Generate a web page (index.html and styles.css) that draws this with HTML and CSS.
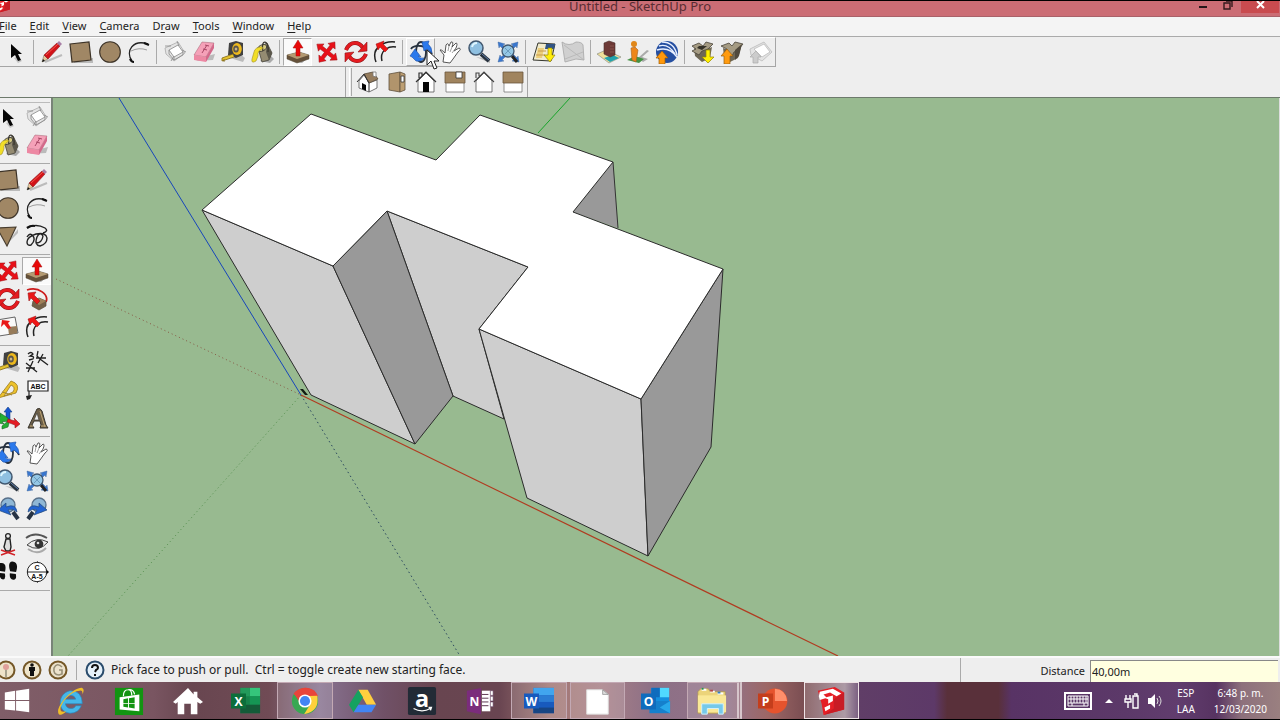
FILE: index.html
```html
<!DOCTYPE html>
<html lang="en">
<head>
<meta charset="utf-8">
<title>Untitled - SketchUp Pro</title>
<link rel="stylesheet" href="styles.css">
</head>
<body>
<svg class="sprite" aria-hidden="true">
<symbol id="select" viewBox="0 0 24 24"><path d="M10 18l4 5 4-2-4-5z" fill="#999" opacity=".5"/><path d="M7 4v14l4-3 3 6 3-1-3-6h4z" fill="#050505"/></symbol>
<symbol id="line" viewBox="0 0 24 24"><path d="M5 22L22 15" stroke="#bbb" stroke-width="2"/><path d="M2 22l2-7 4 4z" fill="#e8c79a" stroke="#665" stroke-width=".5"/><path d="M2 22l1-3 2 2z" fill="#111"/><path d="M4 15L17 3l3 3L8 19z" fill="#d21218" stroke="#8d181c" stroke-width=".6"/><path d="M6 15L18 4" stroke="#f2564c" stroke-width="1"/><path d="M17 3l2-2 3 3-2 2z" fill="#a77fa5"/></symbol>
<symbol id="rect" viewBox="0 0 24 24"><path d="M5 22h18v-4" stroke="#bbb" stroke-width="2" fill="none"/><path d="M1 4l19-2 2 18-19 2z" fill="#a08765" stroke="#3c3226" stroke-width="1.2"/></symbol>
<symbol id="circle" viewBox="0 0 24 24"><circle cx="13" cy="13" r="10" fill="#bbb"/><circle cx="12" cy="12" r="10.3" fill="#a08765" stroke="#3c3226" stroke-width="1.1"/></symbol>
<symbol id="arc" viewBox="0 0 24 24"><path d="M5 21C-2 11 6-1 21 4" fill="none" stroke="#222" stroke-width="1.4"/><path d="M3 19q1 3 4 3M17 3l5 2" stroke="#111" stroke-width="2" fill="none"/><path d="M4 11q8-4 16-1" fill="none" stroke="#888" stroke-width=".8"/></symbol>
<symbol id="component" viewBox="0 0 24 24"><path d="M2 8l13-6 7 11-11 8-8-7z" fill="#e4e4e4" stroke="#aaa" stroke-width=".8"/><path d="M6 10l9-5 5 7-9 5z" fill="#fff" stroke="#888" stroke-width=".8"/><path d="M6 10v4l5 6v-3m0 3l9-5v-3M2 6h6M14 1l2 5M8 21l3-5M19 10l4 2" fill="none" stroke="#888" stroke-width=".8"/></symbol>
<symbol id="eraser" viewBox="0 0 24 24"><path d="M4 21l17-1 2-6-8 2z" fill="#bbb"/><path d="M10 2l12 1-8 14-12-2z" fill="#f5a1b8" stroke="#a06070" stroke-width=".5"/><path d="M2 15l12 2v5L2 20z" fill="#ed88a3"/><path d="M14 17l8-14v5l-8 14z" fill="#d4688a"/><path d="M10 13l5-8M13 5l4 1M11 9l4 1" stroke="#a84765" stroke-width="1"/></symbol>
<symbol id="tape" viewBox="0 0 24 24"><path d="M9 18l13 4 2-4-5-4z" fill="#bbb"/><path d="M8 3l7-2 7 2v12l-7 3-8-3z" fill="#414141"/><ellipse cx="16" cy="9" rx="4.8" ry="6" fill="#edb91d"/><ellipse cx="15" cy="9" rx="2.8" ry="3.6" fill="#5b554b"/><ellipse cx="15" cy="9" rx="1.3" ry="1.6" fill="#c9b687"/><path d="M12 14L1 18v3l12-4M3 19v3" fill="#e4c12e" stroke="#806713" stroke-width=".8"/></symbol>
<symbol id="paint" viewBox="0 0 24 24"><path d="M10 21l10 2 4-4-6-6z" fill="#aaa"/><path d="M8 8l9-5 5 10-3 7-7 2z" fill="#948b72" stroke="#45423a" stroke-width=".8"/><path d="M17 5l5 8-3 7-3-8z" fill="#5b574b"/><ellipse cx="12" cy="8" rx="5" ry="3" transform="rotate(-25 12 8)" fill="#d6ca82" stroke="#333" stroke-width=".8"/><path d="M13 11C10-2 20 0 18 12" fill="none" stroke="#39362e" stroke-width="1.2"/><path d="M12 7Q5 7 4 12l-2 7q-1 5 4 2l2-5q-1-5 5-8" fill="#f1de28" stroke="#a28e24" stroke-width=".6"/></symbol>
<symbol id="push" viewBox="0 0 24 24"><path d="M6 21l10 2 7-6-9-2z" fill="#aaa"/><path d="M1 15l12-3 10 3v4l-12 4-10-4z" fill="#65513a" stroke="#514735" stroke-width=".5"/><path d="M1 15l12-3 10 3-12 4z" fill="#b49a72"/><path d="M12 0l5 8h-3v8h-4V8H7z" fill="#e80808" stroke="#a01010" stroke-width=".5"/></symbol>
<symbol id="move" viewBox="0 0 24 24"><path d="M12-2l5 6h-3v6h6V7l6 5-6 5v-3h-6v6h3l-5 6-5-6h3v-6H4v3l-6-5 6-5v3h6V4H7z" transform="rotate(38 12 12) translate(1 1) scale(.92)" fill="#e81018" stroke="#991418" stroke-width=".5"/></symbol>
<symbol id="rotate" viewBox="0 0 24 24"><g id="half-turn"><path d="M2 10Q5 3 11 3q5 0 8 5" fill="none" stroke="#8b1518" stroke-width="4"/><path d="M2 10Q5 3 11 3q5 0 8 5" fill="none" stroke="#e51b20" stroke-width="3"/><path d="M23 2v9l-9 1z" fill="#e51b20" stroke="#8b1518" stroke-width=".6"/></g><use href="#half-turn" transform="rotate(180 12 12)"/></symbol>
<symbol id="offset" viewBox="0 0 24 24"><path d="M3 22Q-1 11 7 6q6-5 15-4M9 21Q7 13 13 9q4-3 10-2" fill="none" stroke="#222" stroke-width="1.5"/><path d="M3 4l8-3-1 3 5 5-3 3-5-5-2 3z" fill="#ee1515" stroke="#971111" stroke-width=".5"/></symbol>
<symbol id="orbit" viewBox="0 0 24 24"><ellipse cx="12" cy="12" rx="5" ry="10" fill="none" stroke="#27313e" stroke-width="1.8"/><path d="M2 9q2-4 10-3t11 8" fill="none" stroke="#26303d" stroke-width="1.8"/><path d="M13 2l7-1-1 3q4 3 4 9l-5-4-3 2zM1 16l5-7 6 8-3-1q1 3 6 2-2 4-8 3l-4-4z" fill="#2b79ec" stroke="#1c4fa4" stroke-width=".6"/></symbol>
<symbol id="pan" viewBox="0 0 24 24"><path d="M5 22l1-7-4-5q1-1 5 3L8 5q2-3 3 1l2-4q3-1 1 5l4-4q2 0 0 5l-2 3 5-3q3 1-1 4l-5 7-3 4z" fill="#fff" stroke="#444" stroke-width=".9"/><path d="M11 6l-1 5M14 7l-2 5M18 8l-4 5" stroke="#888" stroke-width=".8" fill="none"/></symbol>
<symbol id="zoom" viewBox="0 0 24 24"><path d="M9 17l14 6v-4z" fill="#bbb"/><path d="M14 14l8 7" stroke="#28323d" stroke-width="4"/><path d="M15 14l7 6" stroke="#607fab" stroke-width="1"/><circle cx="9" cy="8" r="7" fill="#8fc0e1" stroke="#42586f" stroke-width="1.5"/><path d="M5 7q1-4 5-4" stroke="#def6ff" stroke-width="2" fill="none"/></symbol>
<symbol id="extents" viewBox="0 0 24 24"><path d="M2 2l7 2-2 1 3 4-2 1-4-4-1 2zM22 2l-1 6-1-2-4 4-2-2 3-3-2-1zM2 22l2-7 1 2 4-3 1 2-4 4 2 1zM23 22l-7-1 3-2-4-3 2-2 4 4 1-2z" fill="#3977cf" stroke="#365e95" stroke-width=".4"/><path d="M16 16l5 6" stroke="#222" stroke-width="3"/><circle cx="12" cy="11" r="6" fill="#94c7e5" stroke="#42586f" stroke-width="1.3"/><path d="M9 8l6 6m0-6l-6 6" stroke="#6c9cbd"/></symbol>
<symbol id="map" viewBox="0 0 24 24"><path d="M1 20L6 3l17 1-4 17z" fill="#f1ebcc" stroke="#35372f" stroke-width="1"/><path d="M14 4h9l-1 5h-9z" fill="#305486"/><path d="M6 8h6l-2 10H4z" fill="#edcf7b"/><path d="M6 11h8M4 15h9" stroke="#c6994e"/><path d="M16 8h4v7h3l-5 7-6-7h4z" fill="#ffed0d" stroke="#958609" stroke-width=".7"/></symbol>
<symbol id="terrain" viewBox="0 0 24 24"><path d="M1 2q7 5 14 0 6 0 7 3l1 15-8-1-11 3z" fill="#d0d0d0" stroke="#a6a6a6" stroke-width=".8"/><path d="M3 5l20 15M4 19l18-7" fill="none" stroke="#b4b4b4" stroke-width=".8"/></symbol>
<symbol id="building" viewBox="0 0 24 24"><path d="M0 14l9-4 15 7-12 6z" fill="#eedf99" stroke="#81847c" stroke-width=".6"/><path d="M7 18l9-3 6 3-9 4z" fill="#22a2ad"/><path d="M7 3l5-2 6 2v12l-5 2-6-3z" fill="#6d3936" stroke="#4b302e" stroke-width=".6"/><path d="M13 6h4m-4 3h4m-4 3h4" stroke="#8f5a52" stroke-width=".8"/></symbol>
<symbol id="street" viewBox="0 0 24 24"><path d="M12 18l9-8 2 1-7 6 6 2-5 3z" fill="#aaa"/><path d="M1 20l8-4 9 3-5 4z" fill="#459244"/><circle cx="8" cy="4" r="3" fill="#e0871a"/><path d="M5 8l4-1 3 3-1 6-1 6-4-2z" fill="#ed861a" stroke="#a56120" stroke-width=".6"/></symbol>
<symbol id="earth" viewBox="0 0 24 24"><circle cx="12" cy="12" r="11" fill="#254fa1"/><path d="M4 6q9-3 16 8M2 10q12-4 20 7M7 2q12 0 15 13" stroke="#e8efff" stroke-width="1.4" fill="none"/><path d="M7 11l6 7h-3v6H4v-6H1z" fill="#ff980b" stroke="#9c5d08" stroke-width=".7"/></symbol>
<symbol id="download" viewBox="0 0 24 24"><path d="M3 8l8 3 10-4-2 11-8 4-7-6z" fill="#6e6755"/><path d="M1 6l7-3 4 3 3-4 7 2-5 5-6 2-3 4-7-4 4-2z" fill="#a59b83" stroke="#49443a" stroke-width=".8"/><path d="M8 6h8l-5 4-5-2z" fill="#353229"/><path d="M15 10h4v7h4l-6 6-6-6h4z" fill="#fff000" stroke="#958600" stroke-width=".7"/></symbol>
<symbol id="upload" viewBox="0 0 24 24"><path d="M3 8l9 3 9-4-3 11-8 4-6-6z" fill="#6e6755"/><path d="M1 6l8-3 3 3 3-4 8 2-5 6-4 2-2 4-7-4 2-3z" fill="#a59b83" stroke="#49443a" stroke-width=".8"/><path d="M22 4l-3 12-4 4V10z" fill="#50493c"/><path d="M7 9l6 7h-3v8H4v-8H1z" fill="#ff9b10" stroke="#935b12" stroke-width=".7"/></symbol>
<symbol id="shareup" viewBox="0 0 24 24"><path d="M1 9l14-7 8 10-10 9-11-6z" fill="#e3e3e3" stroke="#bbb" stroke-width=".8"/><path d="M5 9l10-5 6 8-8 5z" fill="#fff" stroke="#bbb" stroke-width=".8"/><path d="M7 11l5 6H9v6H4v-6H1z" fill="#ccc" stroke="#aaa" stroke-width=".7"/></symbol>
<symbol id="iso" viewBox="0 0 24 24"><path d="M3 11l5-6 5 8v9l-10-4zM13 13l8-3v8l-8 4z" fill="#fff" stroke="#555" stroke-width=".8"/><path d="M8 4l9-2 5 7-9 4z" fill="#967d5e" stroke="#594b3a" stroke-width=".8"/><path d="M1 12l7-8 5 9" fill="none" stroke="#333"/><path d="M6 13l4 2v6l-4-2z" fill="#050505"/><path d="M17 2h3v5l-3-1z" fill="#fff" stroke="#777" stroke-width=".8"/></symbol>
<symbol id="top" viewBox="0 0 24 24"><path d="M4 4l11-2v20L4 20z" fill="#b1946c" stroke="#5f503c" stroke-width=".8"/><path d="M15 2l5 2v16l-5 2z" fill="#bd9f73" stroke="#5f503c" stroke-width=".8"/><path d="M16 6h3v6h-3z" fill="#fff" stroke="#333" stroke-width=".8"/></symbol>
<symbol id="front" viewBox="0 0 24 24"><path d="M4 11l8-8 8 8v11H4z" fill="#fff" stroke="#555" stroke-width=".8"/><path d="M2 12L12 2l10 10M5 8V3h3v3" fill="none" stroke="#333" stroke-width="1.2"/><path d="M9 12h6v10H9z" fill="#050505"/></symbol>
<symbol id="right" viewBox="0 0 24 24"><path d="M3 3h18v19H3z" fill="#fff" stroke="#777" stroke-width=".8"/><path d="M2 2h20v11H2z" fill="#a0845e" stroke="#69563d" stroke-width=".8"/><path d="M13 2h6v6h-6z" fill="#fff" stroke="#333" stroke-width=".8"/></symbol>
<symbol id="backview" viewBox="0 0 24 24"><path d="M4 11l8-8 8 8v11H4z" fill="#fff" stroke="#555" stroke-width=".8"/><path d="M2 12L12 2l10 10M4 8V3h3v3" fill="none" stroke="#444" stroke-width="1.1"/></symbol>
<symbol id="left" viewBox="0 0 24 24"><path d="M3 3h18v19H3z" fill="#fff" stroke="#777" stroke-width=".8"/><path d="M2 2h20v11H2z" fill="#a0845e" stroke="#69563d" stroke-width=".8"/></symbol>
<symbol id="polygon" viewBox="0 0 24 24"><path d="M9 22L22 9v-4z" fill="#bbb"/><path d="M1 4l19-1-9 19z" fill="#9d825d" stroke="#463c2e" stroke-width="1.1"/></symbol>
<symbol id="freehand" viewBox="0 0 24 24"><path d="M2 4q9-5 18 0 4 3-2 5M2 13q3-5 6-1t-2 9q-4 1-4-3 0-5 9-8 10-2 11 4 0 6-7 8-6-1-3-9 3-6 6-1-1 7-7 7" fill="none" stroke="#222" stroke-width="1.4"/><path d="M2 4q4-3 8-2" stroke="#111" stroke-width="2.2" fill="none"/></symbol>
<symbol id="follow" viewBox="0 0 24 24"><path d="M2 3c12-4 22 5 19 12" fill="none" stroke="#cc1b1b" stroke-width="1.8"/><path d="M8 14l6-3 7 3v5l-7 4-7-4z" fill="#736047" stroke="#594c39" stroke-width=".7"/><path d="M8 14l6-3 7 3-7 4z" fill="#a08058"/><path d="M3 6l8-1-2 3 6 6-3 3-6-6-2 3z" fill="#ea1717" stroke="#9b1818" stroke-width=".6"/></symbol>
<symbol id="scale" viewBox="0 0 24 24"><path d="M1 5l18-3 3 16-19 3z" fill="#f9f9f9" stroke="#555" stroke-width=".9"/><path d="M12 12l9-1v7l-8 2z" fill="#967b5a"/><path d="M6 5l8 1-2 2 3 5-3 1-4-5-3 3z" fill="#e81818"/></symbol>
<symbol id="dimension" viewBox="0 0 24 24"><path d="M3 4q3-3 5 0L5 6q5 0 3 3l-4 1M13 1l-1 5 3 3 8 6M18 4l-5 9M11 8h10M8 11l-5 11M1 13l11 9M1 18h9" fill="none" stroke="#222" stroke-width="1.3"/></symbol>
<symbol id="protractor" viewBox="0 0 24 24"><path d="M2 20L15 3q10 3 5 12L2 20zm6-2l9-4q3-5-2-7z" fill="#edc22b" fill-rule="evenodd" stroke="#9a7b20" stroke-width=".8"/><path d="M6 14l10 3" stroke="#a28532"/></symbol>
<symbol id="axes" viewBox="0 0 24 24"><path d="M12 1l4 5h-2v9h-4V6H8z" fill="#1555cf" stroke="#173f84" stroke-width=".6"/><path d="M12 12L4 7v4l-3-1 1 7 6 1-2-2 6-1-6 5v3l6-2 1-4z" fill="#24af33" stroke="#1c642a" stroke-width=".6"/><path d="M12 13l7 2-1-3 6 6-5 4v-3l-8-3z" fill="#e51c24" stroke="#8f1b20" stroke-width=".6"/></symbol>
<symbol id="a3d" viewBox="0 0 24 24"><path d="M3 22L12 3q3-2 5 2l4 14 2 3h-8l1-3-1-4H9l-2 4 2 3z" fill="#6e6049" stroke="#38352d" stroke-width="1"/><path d="M12 7l2 7H9z" fill="#eee" stroke="#44403a" stroke-width=".7"/><path d="M15 5l5 16M5 20h3m8 0h5" stroke="#bda474" fill="none"/></symbol>
<symbol id="previous" viewBox="0 0 24 24"><path d="M17 15l5 7" stroke="#273344" stroke-width="4"/><circle cx="12" cy="8" r="7" fill="#8fb7d5" stroke="#587089" stroke-width="1.3"/><path d="M2 13l8-7v4q10-4 11 5-4-4-9-2l3 5z" fill="#2364d2" stroke="#244a7b" stroke-width=".7"/></symbol>
<symbol id="next" viewBox="0 0 24 24"><path d="M8 15l-5 7" stroke="#273344" stroke-width="4"/><circle cx="14" cy="8" r="7" fill="#8fb7d5" stroke="#587089" stroke-width="1.3"/><path d="M22 13L14 6v4Q4 6 3 15q4-4 9-2l-3 5z" fill="#2364d2" stroke="#244a7b" stroke-width=".7"/></symbol>
<symbol id="position" viewBox="0 0 24 24"><circle cx="12" cy="4" r="2.4" fill="#eee" stroke="#222" stroke-width="1.3"/><path d="M10 7l-2 8 2 4h4l1-4-1-8z" fill="#ddd" stroke="#222" stroke-width="1.4"/><path d="M5 18l14 5m0-5L5 23" stroke="#d12328" stroke-width="1.4"/></symbol>
<symbol id="look" viewBox="0 0 24 24"><path d="M1 6q9-7 21 0" fill="none" stroke="#555" stroke-width="1.8"/><path d="M2 13q9-9 21-3-9 11-21 3z" fill="#ededed" stroke="#444"/><circle cx="14" cy="12" r="4.4" fill="#333"/><circle cx="13" cy="11" r="1.3" fill="#ddd"/><path d="M3 17q10 7 18-1" stroke="#aaa" stroke-width="2" fill="none"/></symbol>
<symbol id="walk" viewBox="0 0 24 24"><path d="M3 12Q-1 4 4 4q6-1 5 8zm1 2h5q2 5-1 6-4 0-4-6zm10-3q-4-9 1-10 7 0 5 10zm0 2h6q2 6-2 6-4 0-4-6z" fill="#111" transform="rotate(7 12 12)"/></symbol>
<symbol id="sketchup" viewBox="0 0 32 32"><path d="M2 5L20 1l10 6v18L8 31 6 19z" fill="#e51f26"/><path d="M19 14l11-7v18L8 31l11-7z" fill="#c81c25"/><path d="M4 6l14-3 9 5-5 3-7-4-7 2 3 3 7-2v6l-5 3v-5l-3-1-6 2-1-4zM9 23l6-3v4l-5 3z" fill="#fff"/></symbol>
</svg>
<header class="titlebar">
<svg class="app-logo" viewBox="0 0 32 32"><use href="#sketchup"/></svg>
<h1>Untitled - SketchUp Pro</h1>
<div class="window-controls">
<button aria-label="Minimize"><svg viewBox="0 0 20 15"><path d="M4 6h8" stroke="#251719" stroke-width="2"/></svg></button>
<button aria-label="Restore"><svg viewBox="0 0 20 15"><path d="M5 2h6v6H5zM7 0h6v6" fill="none" stroke="#33191c" stroke-width="1.4"/></svg></button>
<button class="close" aria-label="Close"><svg viewBox="0 0 20 15"><path d="M7 0l7 7m0-7L7 7" stroke="#fff" stroke-width="2"/></svg></button>
</div>
</header>
<nav class="menubar"><button><u>F</u>ile</button><button><u>E</u>dit</button><button><u>V</u>iew</button><button><u>C</u>amera</button><button>D<u>r</u>aw</button><button><u>T</u>ools</button><button><u>W</u>indow</button><button><u>H</u>elp</button></nav>
<div class="toolbars">
<div class="toolbar" role="toolbar" aria-label="Getting started">
<button aria-label="Select"><svg><use href="#select"/></svg></button><i class="sep"></i>
<button aria-label="Line"><svg><use href="#line"/></svg></button><button aria-label="Rectangle"><svg><use href="#rect"/></svg></button><button aria-label="Circle"><svg><use href="#circle"/></svg></button><button aria-label="Arc"><svg><use href="#arc"/></svg></button><i class="sep"></i>
<button aria-label="Make component"><svg><use href="#component"/></svg></button><button aria-label="Eraser"><svg><use href="#eraser"/></svg></button><button aria-label="Tape measure"><svg><use href="#tape"/></svg></button><button aria-label="Paint bucket"><svg><use href="#paint"/></svg></button><i class="sep"></i>
<button class="pressed" aria-label="Push/Pull"><svg><use href="#push"/></svg></button><button aria-label="Move"><svg><use href="#move"/></svg></button><button aria-label="Rotate"><svg><use href="#rotate"/></svg></button><button aria-label="Offset"><svg><use href="#offset"/></svg></button><i class="sep"></i>
<button class="hovered" aria-label="Orbit"><svg><use href="#orbit"/></svg><svg class="pointer" viewBox="0 0 14 22"><path d="M1 1v15l4-4 3 8 3-1-3-7h5z" fill="#fff" stroke="#222"/></svg></button><button aria-label="Pan"><svg><use href="#pan"/></svg></button><button aria-label="Zoom"><svg><use href="#zoom"/></svg></button><button aria-label="Zoom extents"><svg><use href="#extents"/></svg></button><i class="sep"></i>
<button aria-label="Add location"><svg><use href="#map"/></svg></button><button aria-label="Toggle terrain"><svg><use href="#terrain"/></svg></button><i class="sep"></i>
<button aria-label="Add building"><svg><use href="#building"/></svg></button><button aria-label="Photo textures"><svg><use href="#street"/></svg></button><button aria-label="Preview in Google Earth"><svg><use href="#earth"/></svg></button><i class="sep"></i>
<button aria-label="Get models"><svg><use href="#download"/></svg></button><button aria-label="Share model"><svg><use href="#upload"/></svg></button><button aria-label="Share component"><svg><use href="#shareup"/></svg></button>
</div>
<div class="toolbar views" role="toolbar" aria-label="Views"><i class="grip"></i>
<button aria-label="Iso"><svg><use href="#iso"/></svg></button><button aria-label="Top"><svg><use href="#top"/></svg></button><button aria-label="Front"><svg><use href="#front"/></svg></button><button aria-label="Right"><svg><use href="#right"/></svg></button><button aria-label="Back"><svg><use href="#backview"/></svg></button><button aria-label="Left"><svg><use href="#left"/></svg></button>
</div>
</div>
<div class="workspace">
<aside class="palette" aria-label="Large tool set">
<div class="tools"><button aria-label="Select"><svg><use href="#select"/></svg></button><button aria-label="Make component"><svg><use href="#component"/></svg></button><button aria-label="Paint"><svg><use href="#paint"/></svg></button><button aria-label="Eraser"><svg><use href="#eraser"/></svg></button></div>
<div class="tools"><button aria-label="Rectangle"><svg><use href="#rect"/></svg></button><button aria-label="Line"><svg><use href="#line"/></svg></button><button aria-label="Circle"><svg><use href="#circle"/></svg></button><button aria-label="Arc"><svg><use href="#arc"/></svg></button><button aria-label="Polygon"><svg><use href="#polygon"/></svg></button><button aria-label="Freehand"><svg><use href="#freehand"/></svg></button></div>
<div class="tools"><button aria-label="Move"><svg><use href="#move"/></svg></button><button class="pressed" aria-label="Push/Pull"><svg><use href="#push"/></svg></button><button aria-label="Rotate"><svg><use href="#rotate"/></svg></button><button aria-label="Follow me"><svg><use href="#follow"/></svg></button><button aria-label="Scale"><svg><use href="#scale"/></svg></button><button aria-label="Offset"><svg><use href="#offset"/></svg></button></div>
<div class="tools"><button aria-label="Tape measure"><svg><use href="#tape"/></svg></button><button aria-label="Dimension"><svg><use href="#dimension"/></svg></button><button aria-label="Protractor"><svg><use href="#protractor"/></svg></button><button aria-label="Text"><svg viewBox="0 0 24 24"><path d="M3 3h20v10H3zM4 13v7" fill="#fff" stroke="#222" stroke-width="1.2"/><path d="M1 18l6-1-2 4-3 1z" fill="#222"/><text x="13" y="11" class="label">ABC</text></svg></button><button aria-label="Axes"><svg><use href="#axes"/></svg></button><button aria-label="3D text"><svg><use href="#a3d"/></svg></button></div>
<div class="tools"><button aria-label="Orbit"><svg><use href="#orbit"/></svg></button><button aria-label="Pan"><svg><use href="#pan"/></svg></button><button aria-label="Zoom"><svg><use href="#zoom"/></svg></button><button aria-label="Zoom extents"><svg><use href="#extents"/></svg></button><button aria-label="Previous"><svg><use href="#previous"/></svg></button><button aria-label="Next"><svg><use href="#next"/></svg></button></div>
<div class="tools"><button aria-label="Position camera"><svg><use href="#position"/></svg></button><button aria-label="Look around"><svg><use href="#look"/></svg></button><button aria-label="Walk"><svg><use href="#walk"/></svg></button><button aria-label="Section plane"><svg viewBox="0 0 24 24"><path d="M12 1l12 11-12 11z" fill="#050505"/><circle cx="12" cy="12" r="9.7" fill="#fff" stroke="#222"/><path d="M2 12h20" stroke="#222"/><text x="12" y="10" class="label">C</text><text x="12" y="19" class="label">A-5</text></svg></button></div>
</aside>
<main class="viewport">
<svg class="scene" role="img" aria-label="Extruded model on drawing axes"><g transform="translate(-53 -98)" fill="none">
<path d="M56 279L301 395" stroke="#875a45" stroke-dasharray="1 3"/><path d="M301 395L68 656" stroke="#538e4c" stroke-dasharray="1 3"/><path d="M301 395L460 656" stroke="#29475e" stroke-dasharray="1.5 3"/>
<path d="M119 98L301 395" stroke="#1745bb"/><path d="M570 98L538 133" stroke="#18a52b"/><path d="M301 395L838 656" stroke="#b13b20" stroke-width="1.2"/>
<path d="M613 162L618 228 573 212z" fill="#999"/><path d="M613 162L618 228" stroke="#333"/>
<g stroke="#2b2b2b" stroke-width="1" stroke-linejoin="round"><path d="M387 211L528 267 479 329 504 419 453 396z" fill="#cecece"/><path d="M202 210L333 266 415 444 311 395z" fill="#cecece"/><path d="M333 266L387 211 453 396 415 444z" fill="#999"/><path d="M479 329L641 399 648 556 527 498z" fill="#cecece"/><path d="M641 399L723 269 711 447 648 556z" fill="#999"/><path d="M311 114L436 160 480 115 613 162 573 212 723 269 641 399 479 329 528 267 387 211 333 266 202 210z" fill="#fff"/></g>
<path d="M300 389l3 0 5 6-3 0z" fill="#121b12"/>
</g></svg>
</main>
</div>
<footer class="statusbar">
<div class="status-icons"><button aria-label="Geo-location"><svg viewBox="0 0 20 20"><circle cx="10" cy="10" r="8.5" fill="#eee4ca" stroke="#745727" stroke-width="2"/><path d="M10 9v8" stroke="#776" stroke-width="1.2"/><circle cx="10" cy="7" r="3" fill="#e0a09a"/></svg></button><button aria-label="Claim credit"><svg viewBox="0 0 20 20"><circle cx="10" cy="10" r="8.5" fill="#eee4ca" stroke="#745727" stroke-width="2"/><circle cx="10" cy="5" r="1.8" fill="#111"/><path d="M7 7h6v4h-1v5H8v-5H7z" fill="#111"/></svg></button><button aria-label="Sign in"><svg viewBox="0 0 20 20"><circle cx="10" cy="10" r="8.5" fill="#ece2cc" stroke="#745727" stroke-width="2"/><path d="M14 7q-5-5-8 1-1 7 5 7l3-1v-4h-3" fill="none" stroke="#989078" stroke-width="1.6"/></svg></button></div>
<button class="help" aria-label="Help"><svg viewBox="0 0 20 20"><circle cx="10" cy="10" r="8.5" fill="#e5f1fa" stroke="#2a4c6c" stroke-width="2"/><path d="M7 8q0-3 3-3t3 3q0 1-2 2l-1 2M10 14v2" fill="none" stroke="#111" stroke-width="2"/></svg></button>
<p>Pick face to push or pull.  Ctrl = toggle create new starting face.</p>
<div class="measure"><label for="distance">Distance</label><input id="distance" value="40,00m"></div>
</footer>
<div class="taskbar">
<button class="start" aria-label="Start"><svg viewBox="0 0 32 32"><path d="M3 7l11-2v10H3zM15 5l14-2v12H15zM3 16h11v10L3 25zM15 16h14v12l-14-2z" fill="#fff"/></svg></button>
<div class="apps">
<button aria-label="Internet Explorer"><svg viewBox="0 0 32 32"><path d="M27 21q-3 8-12 8C1 28 1 8 15 5q13 0 13 14H10q1 5 6 5 4 0 5-3zM10 14h11q-1-4-5-4-5 0-6 4z" fill="#45b7ea" fill-rule="evenodd" stroke="#2586be" stroke-width=".7"/><path d="M3 30C-2 23 18 1 28 2q3 2 0 7 1-5-3-4C16 5 3 20 5 26q1 2 6 1-5 5-8 3z" fill="#efbd29"/></svg></button>
<button aria-label="Store"><svg viewBox="0 0 32 32"><path d="M1 2h30v29H1z" fill="#129411"/><path d="M6 12l21-3v18L6 25z" fill="#fff"/><path d="M10 11q0-7 5-7 4 0 4 6M15 4q6-1 7 5" stroke="#fff" stroke-width="1.3" fill="none"/><path d="M10 14l5-1v5h-5zm6-1l6-1v6h-6zm-6 6h5v4l-5-1zm6 0h6v5l-6-1z" fill="#129411"/></svg></button>
<button aria-label="Home"><svg viewBox="0 0 32 32"><path d="M16 2L0 17l3 2 2-2v13h7V19h7v11h7V17l3 2 3-2-6-5V6h-4v3z" fill="#fff"/></svg></button>
<button aria-label="Excel"><svg viewBox="0 0 32 32"><path d="M10 2h21v27H10z" fill="#17824a"/><path d="M20 2h11v9H20z" fill="#35c57b"/><path d="M10 2h10v9H10z" fill="#239a5b"/><path d="M20 11h11v9H20z" fill="#159554"/><path d="M10 20h21v9H10z" fill="#145b38"/><path d="M0 8h16v16H0z" fill="#0c6e3a"/><text x="8" y="21" class="office">X</text></svg></button>
<button class="running" aria-label="Chrome"><svg viewBox="0 0 32 32"><circle cx="16" cy="16" r="14" fill="#38a852"/><path d="M4 9Q10 1 19 2q8 1 11 9H16z" fill="#e9443a"/><path d="M29 10q3 17-14 20l7-11-6-8z" fill="#ffd13b"/><path d="M4 8l7 10 5-8h13Q24 1 14 2 7 3 4 8z" fill="#e9443a"/><circle cx="16" cy="16" r="7" fill="#fff"/><circle cx="16" cy="16" r="5.4" fill="#4285f4"/></svg></button>
<button aria-label="Google Drive"><svg viewBox="0 0 32 32"><path d="M11 4h10l9 16H20z" fill="#ffcf3e"/><path d="M11 4l5 8L6 28l-5-8z" fill="#15a260"/><path d="M11 20h19l-5 8H6z" fill="#4285f4"/></svg></button>
<button aria-label="Amazon"><svg viewBox="0 0 32 32"><rect x="1" y="1" width="30" height="30" rx="2" fill="#222b36"/><text x="16" y="22" class="amazon">a</text><path d="M7 24q9 5 18 0M23 23l3 0-1 3" stroke="#fff" fill="none" stroke-width="1.5"/></svg></button>
<button aria-label="OneNote"><svg viewBox="0 0 32 32"><path d="M2 5l15-3v28L2 27z" fill="#7b2c7c"/><path d="M18 5h9v22h-9z" fill="#fff"/><path d="M18 9h7m-7 4h7m-7 4h7m-7 4h7" stroke="#542d49" fill="none"/><path d="M27 5h3v5h-3zm0 6h3v5h-3zm0 6h3v5h-3z" stroke="#664163" stroke-width=".6" fill="#fff"/><text x="10" y="21" class="office">N</text></svg></button>
<button class="running" aria-label="Word"><svg viewBox="0 0 32 32"><path d="M10 2h22v27H10z" fill="#185abd"/><path d="M10 2h22v8H10z" fill="#41a5ee"/><path d="M10 10h22v7H10z" fill="#2b7cd3"/><path d="M10 23h22v6H10z" fill="#174583"/><path d="M0 8h16v16H0z" fill="#185abd"/><text x="8" y="21" class="office">W</text></svg></button>
<button class="running" aria-label="Document"><svg viewBox="0 0 32 32"><path d="M5 4h17l6 5v21H5z" fill="#fff" stroke="#ddd"/><path d="M22 4v5h6z" fill="#ddd" stroke="#888" stroke-width=".7"/></svg></button>
<button aria-label="Outlook"><svg viewBox="0 0 32 32"><path d="M11 2h19v24H11z" fill="#1490df"/><path d="M20 2h10v10H20z" fill="#50d9ff"/><path d="M11 2h9v10h-9z" fill="#0f6cbd"/><path d="M9 16h22v13H9z" fill="#1580cc"/><path d="M31 16L20 23l11 6z" fill="#28a8ea"/><path d="M0 8h16v17H0z" fill="#0f6cbd"/><text x="8" y="21" class="office">O</text></svg></button>
<button class="running stacked" aria-label="File Explorer"><svg viewBox="0 0 32 32"><path d="M1 6l3-3h8l2 3h16v23H1z" fill="#ecd47a" stroke="#b29b4d" stroke-width=".7"/><path d="M5 4h5m4 2h5m3 2h6" stroke="#fff" stroke-width="2"/><path d="M5 3h2" stroke="#24935a" stroke-width="2"/><path d="M14 5h3" stroke="#b44842" stroke-width="2"/><path d="M22 7h3" stroke="#317fc5" stroke-width="2"/><path d="M1 10h30v18H1z" fill="#fae897"/><path d="M5 30V19h23v11h-5v-6H11v6z" fill="#75c9ea" stroke="#d6f2fd"/></svg></button>
<button aria-label="PowerPoint"><svg viewBox="0 0 32 32"><circle cx="18" cy="16" r="13.3" fill="#e5532d"/><path d="M18 3q12 1 13 13H18z" fill="#ff8f6b"/><path d="M0 8h16v16H0z" fill="#c43e1c"/><text x="8" y="21" class="office">P</text></svg></button>
<button class="running current" aria-label="SketchUp"><svg viewBox="0 0 32 32"><use href="#sketchup"/></svg></button>
</div>
<div class="tray">
<button class="keyboard" aria-label="Touch keyboard"><svg viewBox="0 0 28 18"><rect x="1" y="1" width="26" height="16" fill="none" stroke="#fff" stroke-width="2"/><path d="M4 4h20v10H4zM4 7h20M4 11h20M7 4v7m3-7v7m3-7v7m3-7v7m3-7v7m3-7v7M8 11v3m12-3v3" fill="none" stroke="#fff"/></svg></button>
<button class="small" aria-label="Hidden icons"><svg viewBox="0 0 16 16"><path d="M4 10l4-4 4 4z" fill="#fff"/></svg></button>
<button class="small" aria-label="Battery"><svg viewBox="0 0 16 16"><path d="M9 3h5v12H9zM10 1h3v2M2 2v4m4-4v4M1 6h6v3H1zM4 9v6" fill="none" stroke="#fff" stroke-width="1.4"/></svg></button>
<button class="small" aria-label="Volume"><svg viewBox="0 0 16 16"><path d="M1 5h3l4-4v14l-4-4H1z" fill="#fff"/><path d="M10 5q2 3 0 6m2-8q4 5 0 10" fill="none" stroke="#ddd"/></svg></button>
<button class="language">ESP<br>LAA</button>
<button class="clock">6:48 p. m.<br>12/03/2020</button>
</div>
</div>
</body>
</html>
```
FILE: styles.css
```css
* { box-sizing: border-box; }
body { margin: 0; min-height: 100vh; display: flex; flex-direction: column; background: #eee; color: #222; font: 11px/16px "Noto Sans", "Open Sans", sans-serif; overflow: hidden; border-top: 1px solid #000; border-bottom: 1px solid #000; }
button { margin: 0; padding: 0; border: 0; background: none; color: inherit; font: inherit; }
button svg { display: block; }
.sprite { position: absolute; width: 0; height: 0; }
.label { font: bold 7px "Liberation Sans", sans-serif; fill: #111; text-anchor: middle; }
.office { font: bold 13px "Open Sans", sans-serif; fill: #fff; text-anchor: middle; }
.amazon { font: bold 25px "Open Sans", sans-serif; fill: #fff; text-anchor: middle; }

.titlebar { height: 16px; display: grid; grid-template-columns: 1fr auto 1fr; background: #cb6d75; border-bottom: 1px solid #a96169; overflow: hidden; }
.titlebar h1 { margin: 0; font-size: 13px; line-height: 11px; font-weight: 400; color: #572c32; }
.app-logo { width: 16px; height: 16px; margin: -4px 0 0 -5px; }
.window-controls { display: flex; justify-content: flex-end; padding-right: 1px; }
.window-controls button { width: 24px; height: 12px; display: flex; justify-content: center; }
.window-controls svg { width: 20px; height: 15px; }
.window-controls .close { width: 38px; background: #c94b4f; }

.menubar { height: 20px; display: flex; gap: 13px; margin-left: -1px; background: #f4f4f4; border-bottom: 1px solid #aaa; }
.menubar button { height: 18px; line-height: 18px; }
.menubar u { text-underline-offset: 2px; }

.toolbars { border-bottom: 1px solid #6d7a6c; }
.toolbar { width: max-content; height: 30px; display: flex; align-items: center; border: 1px solid #a5a5a5; border-top-color: #fff; border-left: 0; }
.toolbar button, .tools button { width: 29px; height: 28px; flex: none; display: flex; align-items: center; justify-content: center; position: relative; }
.toolbar svg, .tools svg { width: 24px; height: 24px; }
.sep { width: 7px; height: 24px; border-left: 3px solid transparent; border-right: 3px solid transparent; background: #aaa; background-clip: padding-box; }
.toolbar:first-child { padding-left: 1px; }
.pressed { background: #fafafa; border: 1px solid #aaa; border-right-color: #fff; border-bottom-color: #fff; }
.hovered { border: 1px solid #fff; border-right-color: #aaa; border-bottom-color: #aaa; }
.toolbar .pointer { position: absolute; left: 19px; top: 10px; width: 14px; height: 22px; z-index: 2; }
.views { margin-left: 345px; border-top: 0; border-bottom: 0; border-left: 1px solid #a5a5a5; }
.grip { width: 3px; height: 28px; margin: 0 1px 0 3px; border-left: 1px solid #fff; border-right: 1px solid #aaa; }

.workspace { flex: 1; min-height: 0; display: flex; }
.palette { flex: none; width: 53px; padding-top: 4px; border-right: 2px solid #788478; overflow: hidden; background: #efefef; }
.tools { width: 57px; margin-left: -7px; padding-bottom: 4px; margin-bottom: 2px; border-bottom: 1px solid #aaa; display: grid; grid-template-columns: 29px 29px; }
.tools:first-child { border-top: 1px solid #bbb; }
.viewport { flex: 1; min-width: 0; display: flex; background: #98ba90; border-right: 1px solid #ddd; }
.scene { width: 100%; height: 100%; }

.statusbar { height: 26px; display: flex; align-items: center; background: #eee; border-top: 2px solid #fafafa; }
.status-icons { display: flex; gap: 6px; padding-right: 8px; margin-left: -4px; border-right: 1px solid #aaa; }
.statusbar button, .statusbar button svg { width: 20px; height: 20px; }
.help { margin: 0 6px 0 8px; }
.statusbar p { margin: 0; font-size: 12px; white-space: pre; }
.measure { width: 25%; height: 24px; margin-left: auto; padding: 2px 2px 0 0; display: flex; align-items: center; justify-content: flex-end; border-left: 1px solid #aaa; }
.measure label { margin-right: 5px; }
.measure input { width: 188px; height: 22px; padding: 0 1px; border: 0; border-left: 1px solid #888; border-top: 1px solid #888; background: #ffffe0; color: #222; font: inherit; }

.taskbar { height: 37px; display: flex; color: #fff; background: linear-gradient(90deg, #805e68 0, #795561 12%, #684650 15%, #704b55 21%, #887390 25%, #705167 30%, #684550 34%, #694551 39%, #a27774 43%, #a88087 47%, #8d7086 51%, #927288 57%, #9d6765 60%, #784c51 63%, #9a8391 66%, #603e67 67%, #5d3968 73%, #59303a 74%, #59303a 78%, #583365 79%, #5c3969 88%, #613d6e 92%, #573361 95%, #8d707c 97%, #9a8080 100%); }
.start { width: 43px; padding-left: 2px; display: flex; align-items: center; }
.start svg, .apps svg { width: 30px; height: 30px; }
.apps { width: 64%; display: grid; grid-template-columns: repeat(14, 1fr); }
.apps button { margin-right: 3px; display: flex; align-items: center; justify-content: center; }
.running { border: 1px solid #c3a9b4; background: #ffffff25; }
.apps .running { border: 1px solid #c3a9b4; }
.apps .stacked { border-right: 5px double #d6c5cb; margin-right: 3px; }
.apps .current { border-color: #eee2e5; background: #ffffff30; }
.tray { margin-left: auto; display: flex; align-items: center; padding-right: 13px; }
.keyboard svg { width: 28px; height: 18px; }
.small { margin-left: 7px; }
.small svg { width: 16px; height: 16px; }
.keyboard + .small { margin-left: 9px; }
.language, .clock { font-size: 10px; line-height: 16px; }
.language { margin-left: 14px; }
.clock { margin-left: 19px; }
```
